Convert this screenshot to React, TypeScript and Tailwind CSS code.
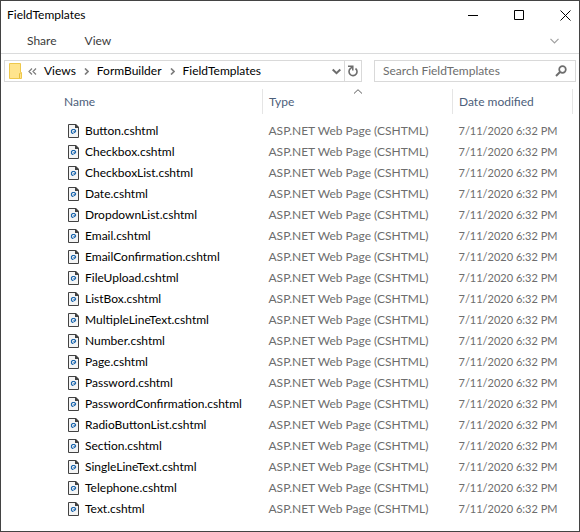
import React, { useState } from 'react';

const files = [
  'Button',
  'Checkbox',
  'CheckboxList',
  'Date',
  'DropdownList',
  'Email',
  'EmailConfirmation',
  'FileUpload',
  'ListBox',
  'MultipleLineText',
  'Number',
  'Page',
  'Password',
  'PasswordConfirmation',
  'RadioButtonList',
  'Section',
  'SingleLineText',
  'Telephone',
  'Text',
];

const path = ['Views', 'FormBuilder', 'FieldTemplates'];

const FileIcon: React.FC = () => (
  <svg width="11" height="14" viewBox="0 0 11 14" fill="none" className="shrink-0" aria-hidden="true">
    <path d="M.5 .5H7.500L10.500 3.500V13.500H.5Z" fill="#f4f4f4" stroke="#424242" />
    <path d="M7 0H8L11 3V4H7Z" fill="#424242" />
    <path
      d="M5.500 9.500H4.500L3.500 8.500V6.500L4.500 5.500H6.500L7.500 6.500V7.500L6.500 8.500L5.500 7.500"
      stroke="#1c66ad"
      strokeWidth="1.200"
    />
  </svg>
);

const FolderIcon: React.FC = () => (
  <svg width="13" height="16" viewBox="0 0 13 16" fill="none" className="shrink-0" aria-hidden="true">
    <path d="M.5 .5H11.500V9.500H12.500V15.500H.5Z" fill="#ffe48d" stroke="#eec84c" />
    <path d="M10.500 15V10.500H11.500" stroke="#e6bd3b" />
  </svg>
);

const Crumb: React.FC = () => (
  <svg width="5" height="7" viewBox="0 0 5 7" fill="none" aria-hidden="true">
    <path d="M1 .5L4 3.500L1 6.500" stroke="#7d7d7d" strokeWidth="1.700" />
  </svg>
);

const TitleBar: React.FC = () => (
  <header className="flex h-7 items-center justify-between pl-1.5">
    <h1>FieldTemplates</h1>
    <div className="flex h-full">
      <button aria-label="Minimize" className="flex w-11 items-center justify-center">
        <svg width="10" height="11" viewBox="0 0 10 11" aria-hidden="true">
          <path d="M0 5.500H10" stroke="#000" />
        </svg>
      </button>
      <button aria-label="Maximize" className="flex w-12 items-center justify-center">
        <svg width="10" height="10" viewBox="0 0 10 10" fill="none" aria-hidden="true">
          <path d="M.5 .5H9.500V9.500H.5Z" stroke="#000" />
        </svg>
      </button>
      <button aria-label="Close" className="flex w-9 items-center justify-end pr-2">
        <svg width="11" height="11" viewBox="0 0 11 11" fill="none" aria-hidden="true">
          <path d="M.5 .5L10.500 10.500M10.500 .5L.5 10.500" stroke="#000" />
        </svg>
      </button>
    </div>
  </header>
);

const Ribbon: React.FC = () => (
  <nav className="flex h-[25px] items-center border-b border-[#dadbdc] pr-5 pl-[26px] text-[#3b3b3b]">
    <button>Share</button>
    <button className="ml-7">View</button>
    <button aria-label="Expand the ribbon" className="ml-auto">
      <svg width="9" height="6" viewBox="0 0 9 6" fill="none" aria-hidden="true">
        <path d="M.5 .8L4.500 4.800L8.500 .8" stroke="#a0a0a0" strokeWidth="1.200" />
      </svg>
    </button>
  </nav>
);

const AddressBar: React.FC = () => {
  const [query, setQuery] = useState('');

  return (
    <div className="flex gap-3 px-[3px] pt-1.5">
      <div className="flex h-[22px] min-w-0 flex-1 border border-[#d9d9d9]">
        <div className="flex min-w-0 flex-1 items-center pl-1">
          <FolderIcon />
          <svg width="9" height="7" viewBox="0 0 9 7" fill="none" className="ml-1.5" aria-hidden="true">
            <path d="M4 .5L1 3.500L4 6.500M8 .5L5 3.500L8 6.500" stroke="#7d7d7d" strokeWidth="1.200" />
          </svg>
          <ol className="ml-[7px] flex items-center">
            {path.map((name, i) => (
              <li key={name} className="flex items-center">
                {i > 0 && (
                  <span className="px-2">
                    <Crumb />
                  </span>
                )}
                <a href="#">{name}</a>
              </li>
            ))}
          </ol>
        </div>
        <button aria-label="Previous locations" className="px-[3px]">
          <svg width="9" height="7" viewBox="0 0 9 7" fill="none" aria-hidden="true">
            <path d="M.7 1.500L4.500 5.200L8.300 1.500" stroke="#6d6d6d" strokeWidth="2" />
          </svg>
        </button>
        <button aria-label="Refresh" className="border-l border-[#d9d9d9] px-[3px]">
          <svg width="10" height="12" viewBox="0 0 10 12" fill="none" aria-hidden="true">
            <path d="M7.500 3.500A4 4 0 1 1 2.300 3.700L4.300 2" stroke="#6d6d6d" strokeWidth="1.600" />
            <path d="M0 1.200H4.800V5.500" stroke="#6d6d6d" strokeWidth="1.500" />
          </svg>
        </button>
      </div>
      <label className="flex h-[22px] w-[202px] items-center border border-[#d9d9d9] pr-2 pl-2">
        <input
          type="text"
          aria-label="Search FieldTemplates"
          placeholder="Search FieldTemplates"
          value={query}
          onChange={(e) => setQuery(e.target.value)}
          className="min-w-0 flex-1 outline-none placeholder:text-[#6d6d6d]"
        />
        <svg width="12" height="12" viewBox="0 0 12 12" fill="none" className="shrink-0" aria-hidden="true">
          <circle cx="7.500" cy="4.500" r="3.300" stroke="#6d6d6d" strokeWidth="1.700" />
          <path d="M5 7L1 11" stroke="#6d6d6d" strokeWidth="2" />
        </svg>
      </label>
    </div>
  );
};

const FileTable: React.FC = () => (
  <div className="pt-[7px] pr-1.5 pb-3">
    <table className="w-full table-fixed text-left whitespace-nowrap">
      <colgroup>
        <col />
        <col className="w-[190px]" />
        <col className="w-[120px]" />
      </colgroup>
      <thead className="text-[#4c607a]">
        <tr className="h-[25px]">
          <th className="border-r border-[#e5e5e5] pl-[63px] font-normal">Name</th>
          <th className="relative border-r border-[#e5e5e5] pl-1.5 font-normal" aria-sort="ascending">
            Type
            <svg
              width="9"
              height="5"
              viewBox="0 0 9 5"
              fill="none"
              className="absolute top-0 left-1/2 -translate-x-1/2"
              aria-hidden="true"
            >
              <path d="M.5 4.500L4.500 .7L8.500 4.500" stroke="#5d5d5d" />
            </svg>
          </th>
          <th className="border-r border-[#e5e5e5] pl-1.5 font-normal">Date modified</th>
        </tr>
      </thead>
      <tbody className="text-[#6d6d6d] before:block before:h-1.5">
        {files.map((name) => (
          <tr key={name} className="h-[21px]">
            <td className="pl-[67px] text-black">
              <div className="flex items-center gap-1.5">
                <FileIcon />
                <span>{name}.cshtml</span>
              </div>
            </td>
            <td className="pl-1.5">ASP.NET Web Page (CSHTML)</td>
            <td className="pl-1.5 text-[11px]">7/11/2020 6:32 PM</td>
          </tr>
        ))}
      </tbody>
    </table>
  </div>
);

const App: React.FC = () => (
  <main className="min-h-screen border border-[#434343] bg-white font-['Lato',sans-serif] text-[12px] leading-4 text-black">
    <TitleBar />
    <Ribbon />
    <AddressBar />
    <FileTable />
  </main>
);

export default App;
